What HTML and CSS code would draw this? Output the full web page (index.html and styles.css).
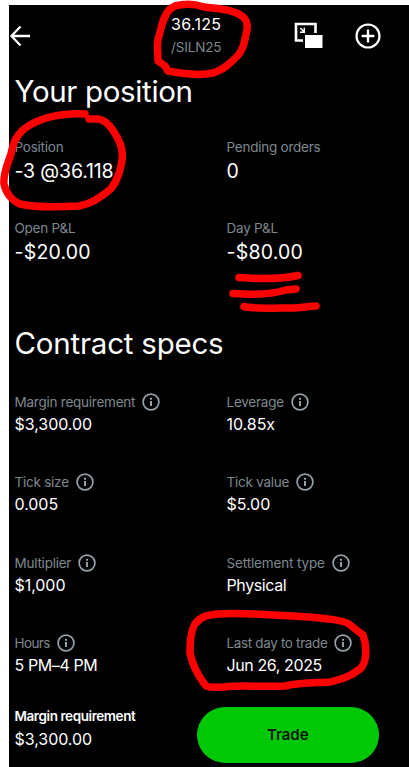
FILE: index.html
```
<!DOCTYPE html>
<html lang="en">
<head>
<meta charset="utf-8">
<title>/SILN25</title>
<link rel="stylesheet" href="styles.css">
</head>
<body>
<svg class="defs" width="0" height="0" aria-hidden="true">
  <symbol id="info" viewBox="0 0 18 18">
    <circle cx="9" cy="9" r="7.9" fill="none" stroke="currentColor" stroke-width="1.7"/>
    <path d="M8 4.7h2v2H8zM8 8h2v5H8z" fill="currentColor"/>
  </symbol>
</svg>
<main class="screen">
  <header class="bar">
    <svg class="back" width="22" height="22" viewBox="0 0 22 22"><path d="M11.5 1.500 2.5 11l9 9.500M2.5 11h18.5" fill="none" stroke="currentColor" stroke-width="2.300"/></svg>
    <div class="quote"><div class="price">36.125</div><div class="symbol">/SILN25</div></div>
    <svg class="pip" width="30" height="28" viewBox="0 0 30 28"><path d="M9 18.5H2V2h19.5v9" fill="none" stroke="currentColor" stroke-width="2.6"/><path d="M11 13h17.5v13H11z" fill="currentColor"/><path d="m6.300 6 3.500 3.500M10.300 5.800v4.400H6" fill="none" stroke="currentColor" stroke-width="1.500"/></svg>
    <svg class="add" width="26" height="26" viewBox="0 0 26 26"><path d="M13 6.600v12.800M6.600 13h12.800" stroke="currentColor" stroke-width="2.400"/><circle cx="13" cy="13" r="11.500" fill="none" stroke="currentColor" stroke-width="2.200"/></svg>
  </header>

  <h1 class="title">Your position</h1>
  <section class="grid position">
    <div><div class="label">Position</div><div class="amount amount-tight">-3 @36.118</div></div>
    <div><div class="label">Pending orders</div><div class="amount">0</div></div>
    <div><div class="label">Open P&amp;L</div><div class="amount">-$20.00</div></div>
    <div><div class="label">Day P&amp;L</div><div class="amount">-$80.00</div></div>
  </section>

  <h2 class="title title-specs">Contract specs</h2>
  <section class="grid specs">
    <div><div class="label">Margin requirement<svg class="info"><use href="#info"/></svg></div><div class="value">$3,300.00</div></div>
    <div><div class="label">Leverage<svg class="info"><use href="#info"/></svg></div><div class="value">10.85x</div></div>
    <div><div class="label">Tick size<svg class="info"><use href="#info"/></svg></div><div class="value">0.005</div></div>
    <div><div class="label">Tick value<svg class="info"><use href="#info"/></svg></div><div class="value">$5.00</div></div>
    <div><div class="label">Multiplier<svg class="info"><use href="#info"/></svg></div><div class="value">$1,000</div></div>
    <div><div class="label label-wide">Settlement type<svg class="info"><use href="#info"/></svg></div><div class="value value-text">Physical</div></div>
    <div><div class="label label-narrow">Hours<svg class="info"><use href="#info"/></svg></div><div class="value value-text">5 PM–4 PM</div></div>
    <div><div class="label label-tight">Last day to trade<svg class="info"><use href="#info"/></svg></div><div class="value value-text">Jun 26, 2025</div></div>
  </section>

  <footer class="footer">
    <div class="margin"><div class="margin-label">Margin requirement</div><div class="value">$3,300.00</div></div>
    <button class="trade">Trade</button>
  </footer>
</main>
<svg class="marks" width="409" height="767" viewBox="0 0 409 767" aria-hidden="true">
  <path d="M175 6C187 3 195 4 204 7C219 9 232 9 242 16C250 22 247 30 245 39C243 51 238 56 231 62C226 67 219 71 213 73C200 76 184 74 168 71L165 66L158 61C158 51 156 43 159 36C162 26 163 16 170 9Z"/>
  <path d="M85 114C60 113 39 118 24 129C15 137 13 144 11 154C8 163 3 173 4 184C6 193 11 200 20 204C37 208 60 207 79 206C91 204 99 198 107 192C114 187 117 180 120 170C124 157 123 148 118 139C113 129 107 120 98 119L89 119"/>
  <path d="M239 277.500C258 279 282 279 298 275.500M233 293.500C252 295 273 294 286 290L296 289M244 306.500C254 309 280 308 293 308C302 308 308 306 316 306"/>
  <path d="M206 686C198 676 192 663 190 653C190 642 191 630 195 624C201 616 208 615 218 614C237 612 280 615 309 617C330 619 342 620 349 624C356 630 359 632 363 635C368 649 366 664 360 669C350 677 341 679 330 682C315 683 302 682 285 686C264 687 239 685 224 687C215 687 210 688 206 686Z"/>
</svg>
</body>
</html>
```
FILE: styles.css
```
* { box-sizing: border-box; }
body { margin: 0; background: #fff; font-family: Inter, "Liberation Sans", sans-serif; }
.defs { display: block; }
.screen { margin: 5px 0 0 9px; height: 762px; padding-left: 5.5px; background: #000; color: #fff; overflow: hidden; }
.bar { display: flex; height: 62px; margin-left: -5.5px; }
.back { margin: 20px 0 0; }
.quote { width: 52px; margin: 8px 0 0 140px; }
.price { font-size: 16px; line-height: 22px; letter-spacing: .3px; }
.symbol { font-size: 13.5px; line-height: 22px; margin-top: 1px; color: #7d888e; letter-spacing: -.15px; }
.pip { margin: 17px 0 0 71px; }
.add { margin: 17.5px 0 0 31px; }
.title { margin: 0; padding-top: 4px; font-size: 29.5px; line-height: 40px; font-weight: 400; letter-spacing: -.35px; }
.grid { display: grid; grid-template-columns: 212px 1fr; }
.position { margin-top: 25.5px; grid-auto-rows: 81px; }
.label { display: flex; align-items: center; height: 20px; font-size: 13.5px; letter-spacing: -.24px; color: #7d888e; white-space: nowrap; }
.label-wide { letter-spacing: -.15px; }
.label-tight { letter-spacing: -.35px; }
.label-narrow { letter-spacing: -.6px; }
.amount { height: 28px; line-height: 29px; font-size: 19.5px; letter-spacing: .2px; }
.amount-tight { letter-spacing: -.15px; }
.title-specs { margin-top: 20px; letter-spacing: -.22px; }
.specs { margin-top: 29.5px; grid-auto-rows: 80.3px; }
.info { width: 18px; height: 18px; margin-left: 6.8px; color: #95a1a8; }
.value { height: 24px; line-height: 25px; font-size: 16px; letter-spacing: -.05px; white-space: nowrap; }
.value-text { letter-spacing: -.4px; }
.footer { display: flex; height: 56px; margin-top: -6.5px; }
.margin { width: 182px; margin-top: -2px; }
.margin-label { height: 22px; line-height: 22px; font-size: 13.5px; font-weight: 600; letter-spacing: -.42px; }
.trade { width: 182.5px; height: 56px; border: 0; padding: 0; border-radius: 28px; background: #00c805; color: #06140a; font: 600 15px Inter, sans-serif; }
.marks { position: absolute; left: 0; top: 0; pointer-events: none; fill: none; stroke: #f00; stroke-width: 7.5; stroke-linecap: round; stroke-linejoin: round; }
```
